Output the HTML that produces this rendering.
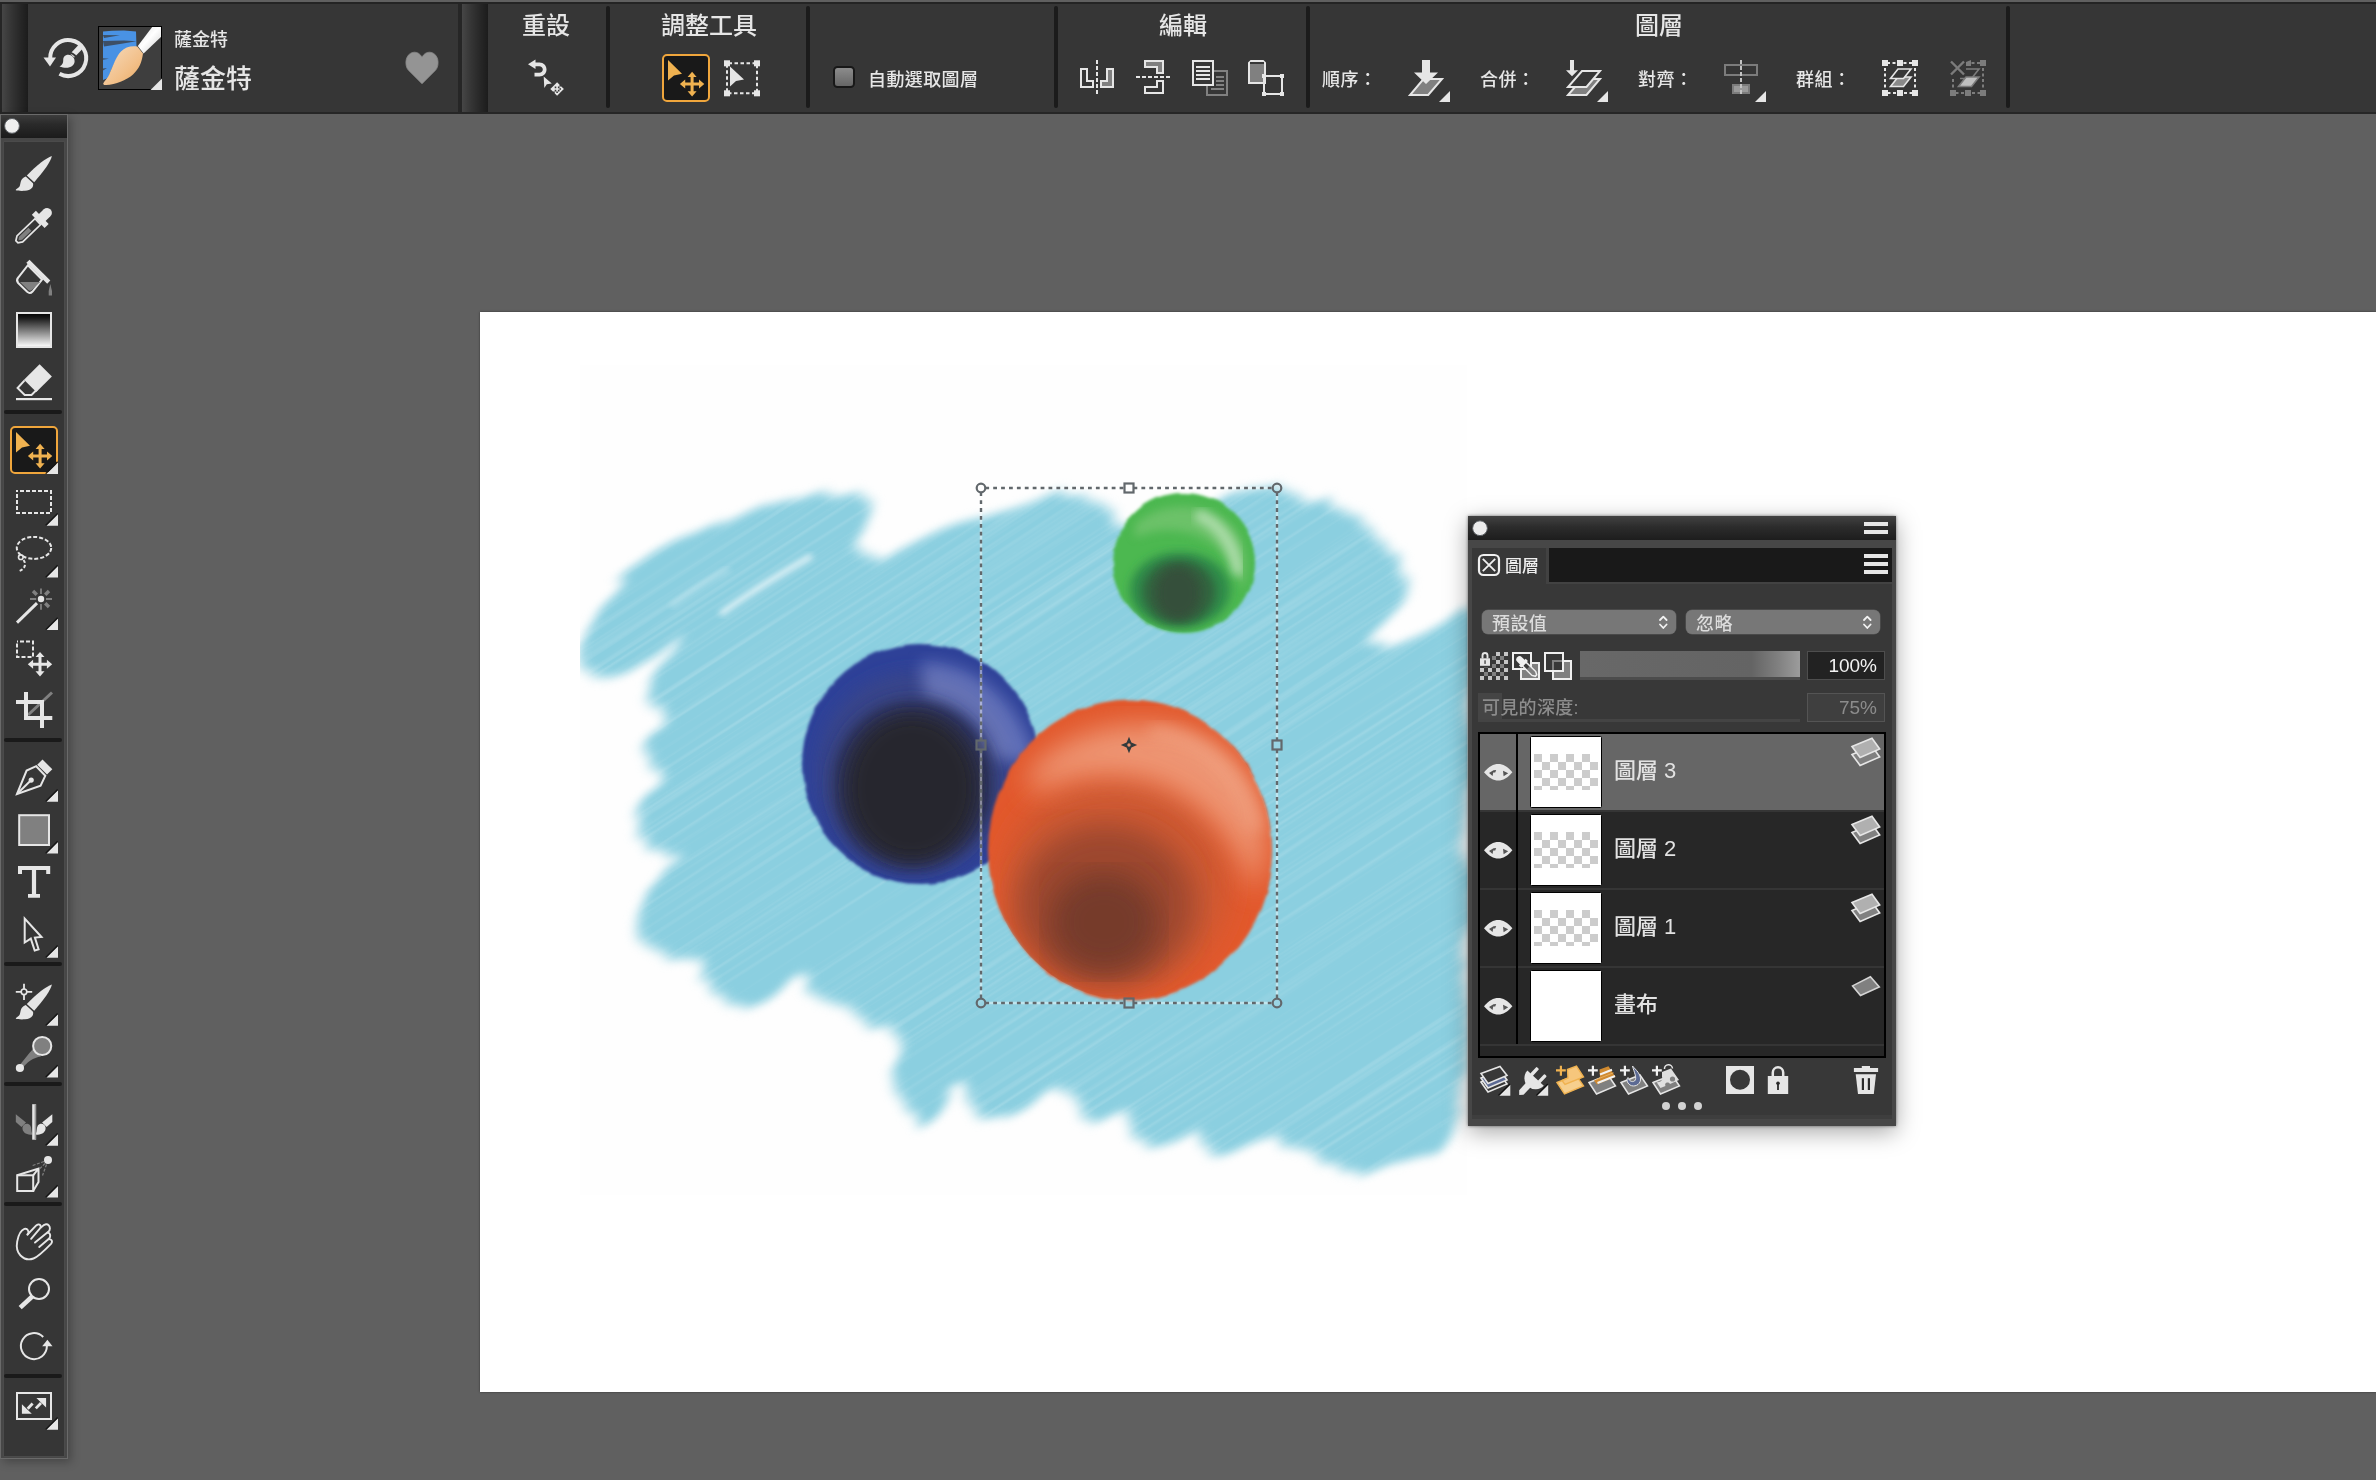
<!DOCTYPE html>
<html lang="zh-Hant">
<head>
<meta charset="utf-8">
<title>Painter</title>
<style>
*{box-sizing:border-box;margin:0;padding:0}
html,body{width:2376px;height:1480px;overflow:hidden;background:#606060}
body{position:relative;font-family:"Liberation Sans","Noto Sans CJK TC",sans-serif;color:#e4e4e4;font-weight:500}
.abs{position:absolute}
#root{position:absolute;left:0;top:0;width:2376px;height:1480px;will-change:transform;transform:translateZ(0)}
svg{position:absolute;overflow:visible}
/* ---------- top property bar ---------- */
#topstrip{left:0;top:0;width:2376px;height:4px;background:#606060;border-bottom:2px solid #242424}
#bar{left:0;top:4px;width:2376px;height:110px;background:#363636;border-bottom:2px solid #262626}
.grip{top:4px;height:108px;background:linear-gradient(90deg,#464646 0%,#353535 35%,#272727 70%,#1c1c1c 100%)}
.vsep{top:6px;width:4px;height:102px;border-radius:2px;background:#1b1b1b}
.ttl{top:9.5px;height:32px;line-height:32px;font-size:24px;text-align:center;white-space:nowrap;color:#e6e6e6}
.lbl{top:65.5px;height:28px;line-height:28px;font-size:18px;letter-spacing:.4px;white-space:nowrap;color:#e6e6e6}
.selbtn{width:48px;height:48px;border:2px solid #f0a63c;border-radius:5px;background:#191919}
.tri{width:0;height:0;border-left:11px solid transparent;border-bottom:11px solid #e6e6e6}
/* ---------- toolbox ---------- */
#tbx{left:0;top:114px;width:68px;height:1345px;background:#474747;border:1px solid #6a6a6a;box-shadow:3px 3px 9px rgba(0,0,0,.28)}
#tbxhead{left:1px;top:115px;width:66px;height:23px;background:linear-gradient(180deg,#3c3c3c,#2a2a2a 40%,#1b1b1b)}
#tbxbody{left:4px;top:142px;width:60px;height:1313.500px;background:#363636;box-shadow:0 0 0 .5px #505050}
.hsep{left:4px;width:58px;height:4px;border-radius:2px;background:#1a1a1a}
/* ---------- canvas ---------- */
#canvas{left:480px;top:312px;width:1896px;height:1080px;background:#fff;box-shadow:0 0 2px rgba(0,0,0,.5)}
/* ---------- layers panel ---------- */
#pnl{left:1468px;top:516px;width:428px;height:609.500px;background:#474747;box-shadow:0 6px 22px rgba(0,0,0,.35),0 0 3px rgba(0,0,0,.5)}
.dd{width:194px;height:24px;border-radius:6px;background:#777;box-shadow:0 0 0 .5px #5a5a5a}
.dd span{position:absolute;left:10px;top:.5px;line-height:26px;font-size:18px;color:#dcdcdc;letter-spacing:.4px}
.pct{width:78px;height:29px;line-height:27px;font-size:19px;text-align:right;padding-right:7px;font-family:"Liberation Sans",sans-serif;font-weight:400}
.th{left:1530px;width:72px;height:72px;background:#fff;border:1px solid #000;border-radius:1.500px}
.ck::after{content:"";position:absolute;left:3px;top:17px;width:64px;height:36px;background:conic-gradient(#fff 25%,#ccc 0 50%,#fff 0 75%,#ccc 0) 0 0/16px 16px}
.ln{left:1614px;height:32px;line-height:32px;font-size:22px;color:#e2e2e2;white-space:nowrap;font-weight:500}
</style>
</head>
<body>
<div id="root">
<div class="abs" id="topstrip"></div>
<div class="abs" id="bar"></div>
<div class="abs" style="left:0;top:4px;width:2px;height:108px;background:#262626"></div>
<div class="abs grip" style="left:2px;width:26px"></div>
<div class="abs" style="left:458px;top:4px;width:4px;height:108px;background:#262626"></div>
<div class="abs grip" style="left:462px;width:26px"></div>
<div class="abs vsep" style="left:606px"></div>
<div class="abs vsep" style="left:806px"></div>
<div class="abs vsep" style="left:1054px"></div>
<div class="abs vsep" style="left:1306px"></div>
<div class="abs vsep" style="left:2006px"></div>

<div class="abs" style="left:174px;top:26.5px;height:26px;line-height:26px;font-size:18px;color:#e6e6e6;white-space:nowrap">薩金特</div>
<div class="abs" style="left:174px;top:60px;height:38px;line-height:38px;font-size:26px;color:#e6e6e6;white-space:nowrap">薩金特</div>

<div class="abs ttl" style="left:496px;width:100px">重設</div>
<div class="abs ttl" style="left:629px;width:160px">調整工具</div>
<div class="abs ttl" style="left:1133px;width:100px">編輯</div>
<div class="abs ttl" style="left:1609px;width:100px">圖層</div>

<div class="abs lbl" style="left:868px">自動選取圖層</div>
<div class="abs lbl" style="left:1322px">順序：</div>
<div class="abs lbl" style="left:1480px">合併：</div>
<div class="abs lbl" style="left:1638px">對齊：</div>
<div class="abs lbl" style="left:1796px">群組：</div>

<div class="abs" style="left:833px;top:66px;width:22px;height:22px;border-radius:4.5px;border:2px solid #181818;background:linear-gradient(180deg,#8c8c8c,#666)"></div>
<div class="abs selbtn" style="left:662px;top:54px"></div>
<div class="abs" style="left:98px;top:26px;width:64px;height:64px;background:#3e3e3e;border:1px solid #000"></div>

<svg width="2376" height="113" viewBox="0 0 2376 113" style="left:0;top:0">
<defs>
<linearGradient id="peach" x1="0" y1="0" x2="1" y2="1"><stop offset="0" stop-color="#f6dcc0"/><stop offset=".6" stop-color="#f2c08a"/><stop offset="1" stop-color="#e8a860"/></linearGradient>
<linearGradient id="hand" x1="0" y1="0" x2="1" y2="1"><stop offset="0" stop-color="#dcdcdc"/><stop offset=".45" stop-color="#ffffff"/><stop offset="1" stop-color="#c8c8c8"/></linearGradient>
<clipPath id="thclip"><rect x="99" y="27" width="62" height="62"/></clipPath>
</defs>
<!-- reset brush icon -->
<g fill="none" stroke="#e6e6e6">
<path d="M50.2 58.5 A18 18 0 1 1 59.5 73.8" stroke-width="4"/>
<path d="M72.2 55.6 L82.3 45" stroke-width="5.5"/>
</g>
<path d="M43.5 57.5 L56 57.5 L50 66.5Z" fill="#e6e6e6"/>
<path d="M66 55.3 C70.5 53.6 74.800 57 74.600 61.500 C74.400 66.500 68 69.800 59.5 66.500 C62.5 65 63.2 63 63.2 60.800 C63 58 64 56.2 66 55.3Z" fill="#e6e6e6"/>
<path d="M64.5 52.8 C70.5 51 77 55 77.300 61.5" fill="none" stroke="#363636" stroke-width="2"/>
<!-- brush thumbnail -->
<filter id="b05" x="-10%" y="-10%" width="120%" height="120%"><feGaussianBlur stdDeviation=".5"/></filter>
<g clip-path="url(#thclip)">
<g filter="url(#b05)">
<path d="M103 31.500 L112 30.800 L124 30.500 L136 31.500 L136.500 47.500 L128 49 L118 56 L112 68 L108 78 L103 80 Z" fill="#4a92e4"/>
<path d="M103 35 L120 35.300 L104 38Z M103 41 L124 40.500 L136.500 41.200 L120 44 L104 46.500Z M103 58.200 L109 58.700 L103 59.800Z M103 68.500 L107 68 L103 70.500Z" fill="#3a4450" opacity=".85"/>
<path d="M153.700 25 L164 25 L164 34 L143.600 53.500 L137.800 46Z" fill="url(#hand)"/>
<path d="M137.300 46.600 C131 45.500 125 47.500 121 51.500 C116 56.500 113 66 109 75 C107 79 104.500 81 103.300 83.200 C103 84.500 104 85.200 106 85 C116 84.500 126 80.500 133 74.500 C139 69 142 62 143 53.500Z" fill="url(#peach)"/>
</g>
</g>
<path d="M162 78.500 L162 90 L150.500 90Z" fill="#e6e6e6"/>
<!-- heart -->
<path d="M422 83.800 L408.500 70.300 C405.200 66.800 405.600 60.500 406.800 57.800 C408.300 54 411.500 52.200 414.500 52.200 C417.500 52.200 420.200 53.800 422 57.200 C423.800 53.800 426.500 52.200 429.500 52.200 C432.500 52.200 435.700 54 437.200 57.800 C438.400 60.500 438.800 66.800 435.500 70.300Z" fill="#949494" stroke="#868686" stroke-width=".8" stroke-linejoin="round"/>
<!-- reset tool icon -->
<g fill="#e6e6e6">
<path d="M528 64.200 L535.500 59.500 L535.500 62.500 L539.500 62.500 C543.500 62.500 546.500 65.500 546.500 69.500 C546.500 73.500 543.500 76.500 539.500 76.500 L534.500 76.500 L534.500 72.800 L539.300 72.800 C541.300 72.800 542.800 71.300 542.800 69.500 C542.800 67.700 541.300 66.200 539.300 66.200 L535.500 66.200 L535.500 69Z"/>
<path d="M543.700 76.500 L551.800 83.500 L546.800 84.300 L544.300 88Z"/>
<path d="M557.100 82.200 L561.300 86.600 L552.900 86.600Z M557.100 95.800 L561.300 91.400 L552.900 91.400Z M550.300 89 L554.700 84.800 L554.700 93.200Z M563.900 89 L559.500 84.800 L559.500 93.200Z M556.300 85 H557.900 V88.200 H561 V89.800 H557.900 V93 H556.300 V89.800 H553.200 V88.200 H556.300Z"/>
</g>
<!-- selected tool: arrow + move -->
<g fill="#f0b250">
<path d="M668 60 L682 73.800 L674 75.500 L668 80.500Z"/>
<path d="M692.100 71.800 L696.600 77 L693.600 77 L693.600 82.600 L699 82.600 L699 79.600 L704.300 84.100 L699 88.600 L699 85.600 L693.600 85.600 L693.600 91.200 L696.600 91.200 L692.100 96.400 L687.600 91.200 L690.600 91.200 L690.600 85.600 L685.200 85.600 L685.200 88.600 L679.900 84.100 L685.200 79.600 L685.200 82.600 L690.600 82.600 L690.600 77 L687.600 77Z"/>
</g>
<!-- transform tool -->
<g fill="#e6e6e6">
<rect x="727" y="63.300" width="30" height="30" fill="none" stroke="#e6e6e6" stroke-width="2" stroke-dasharray="3.500 2.500" stroke-dashoffset="-1.500"/>
<rect x="724" y="60.300" width="6" height="6"/><rect x="754" y="60.300" width="6" height="6"/>
<rect x="724" y="90.300" width="6" height="6"/><rect x="754" y="90.300" width="6" height="6"/>
<path d="M730 66.500 L744 79.500 L736 81 L730 86.500Z"/>
</g>
<!-- edit: flip horizontal -->
<g fill="none" stroke="#e6e6e6" stroke-width="2">
<path d="M1081 69 H1087 V81 H1093 V87 H1081Z"/>
<path d="M1097 60 V94" stroke-dasharray="4 2"/>
<path d="M1113 69 H1107 V81 H1101 V87 H1113Z" fill="#808080"/>
<!-- flip vertical -->
<path d="M1145 61 H1163 V73 H1157 V67 H1145Z" fill="#808080"/>
<path d="M1136 77 H1170" stroke-dasharray="4 2"/>
<path d="M1145 93 H1163 V81 H1157 V87 H1145Z"/>
</g>
<!-- copy docs -->
<g fill="none" stroke="#808080" stroke-width="2">
<rect x="1207" y="71" width="20" height="24"/>
<path d="M1216 77 H1224 M1216 81 H1224 M1216 85 H1224 M1211 89 H1224"/>
</g>
<g fill="#363636" stroke="#e6e6e6" stroke-width="2">
<rect x="1193" y="61" width="20" height="24"/>
<path d="M1196 67 H1210 M1196 71 H1210 M1196 75 H1210 M1196 79 H1210"/>
</g>
<!-- free transform -->
<path d="M1251 61 H1263 L1265 63 V83 H1249 V63Z" fill="#808080" stroke="#e6e6e6" stroke-width="2"/>
<rect x="1250" y="62" width="14" height="2" fill="#363636"/>
<rect x="1264" y="76" width="18" height="18" fill="none" stroke="#e6e6e6" stroke-width="2"/>
<g fill="#e6e6e6"><rect x="1262" y="74" width="4" height="4"/><rect x="1280" y="74" width="4" height="4"/><rect x="1262" y="92" width="4" height="4"/><rect x="1280" y="92" width="4" height="4"/></g>
<!-- order -->
<path d="M1423.500 79 L1442 79 L1428.200 95 L1410 95Z" fill="#808080" stroke="#e6e6e6" stroke-width="2"/>
<path d="M1422 60 H1430 V72.500 H1438 L1426 84 L1414 72.500 H1422Z" fill="#e6e6e6"/>
<path d="M1450 91 V102 H1439Z" fill="#e6e6e6"/>
<!-- merge -->
<path d="M1582 79 L1600 79 L1586.500 95 L1568 95Z" fill="#808080" stroke="#e6e6e6" stroke-width="2"/>
<path d="M1582 71 L1600 71 L1586.500 87 L1568 87Z" fill="#363636" stroke="#e6e6e6" stroke-width="2"/>
<path d="M1570 60 H1574 V70.300 H1578 L1572 76.300 L1566 70.300 H1570Z" fill="#e6e6e6"/>
<path d="M1608 91 V102 H1597Z" fill="#e6e6e6"/>
<!-- align -->
<rect x="1725" y="65" width="32" height="10" fill="none" stroke="#7c7c7c" stroke-width="2"/>
<rect x="1733" y="85" width="16" height="8" fill="#9a9a9a" stroke="#7c7c7c" stroke-width="2"/>
<path d="M1741 60 V96" stroke="#c4c4c4" stroke-width="2" stroke-dasharray="4 2"/>
<path d="M1766 91 V102 H1755Z" fill="#e6e6e6"/>
<!-- group -->
<rect x="1885" y="63" width="30" height="30" fill="none" stroke="#e6e6e6" stroke-width="2" stroke-dasharray="3 2.500" stroke-dashoffset="-2"/>
<g fill="#e6e6e6"><rect x="1882" y="60" width="6" height="6"/><rect x="1897" y="60" width="6" height="6"/><rect x="1912" y="60" width="6" height="6"/><rect x="1882" y="90" width="6" height="6"/><rect x="1897" y="90" width="6" height="6"/><rect x="1912" y="90" width="6" height="6"/></g>
<path d="M1898 77 L1911 77 L1903.500 86.500 L1890.500 86.500Z" fill="#8a8a8a" stroke="#e6e6e6" stroke-width="1.600"/>
<path d="M1898 69 L1911 69 L1903.500 78.500 L1890.500 78.500Z" fill="#363636" stroke="#e6e6e6" stroke-width="1.600"/>
<!-- ungroup (disabled) -->
<rect x="1953" y="63" width="30" height="30" fill="none" stroke="#7c7c7c" stroke-width="2" stroke-dasharray="3 2.500" stroke-dashoffset="-2"/>
<rect x="1949" y="59" width="18" height="18" fill="#363636"/>
<g fill="#7c7c7c"><rect x="1980" y="60" width="6" height="6"/><rect x="1950" y="90" width="6" height="6"/><rect x="1965" y="90" width="6" height="6"/><rect x="1980" y="90" width="6" height="6"/><path d="M1966 62 L1971 60 V66 H1966Z"/></g>
<path d="M1951 61.500 L1964 74.500 M1964 61.500 L1951 74.500" stroke="#7c7c7c" stroke-width="2.400"/>
<path d="M1966 69 L1979 69 L1971.500 78.500 L1960 78.500" fill="none" stroke="#7c7c7c" stroke-width="1.600"/>
<path d="M1966 77 L1979 77 L1971.500 86.500 L1958.500 86.500Z" fill="#c0c0c0" stroke="#7c7c7c" stroke-width="1.600"/>
</svg>
<div class="abs" id="tbx"></div>
<div class="abs" id="tbxhead"></div>
<div class="abs" id="tbxbody"></div>
<div class="abs hsep" style="top:410px"></div>
<div class="abs hsep" style="top:738px"></div>
<div class="abs hsep" style="top:962px"></div>
<div class="abs hsep" style="top:1082px"></div>
<div class="abs hsep" style="top:1202px"></div>
<div class="abs hsep" style="top:1374px"></div>
<div class="abs selbtn" style="left:10px;top:426px"></div>
<svg width="72" height="1480" viewBox="0 0 72 1480" style="left:0;top:0">
<defs>
<linearGradient id="bw" x1="0" y1="0" x2="0" y2="1"><stop offset="0" stop-color="#000"/><stop offset=".15" stop-color="#1a1a1a"/><stop offset="1" stop-color="#fff"/></linearGradient>
<g id="brushico">
<path d="M51.9 156 C50.500 162 44 171 34.200 182.200 L26.800 175.400 C37 165 46 158 51.900 156Z"/>
<path d="M25.800 176.500 L33 183.300 C34 187 31 190.500 25 190.800 C21 191 17 190.800 15.800 190.300 C15.600 189 18 188.500 19.500 186.500 C21 184 19.500 179 25.800 176.500Z"/>
</g>
<g id="tri"><path d="M58 -11.500 V0 H46.500Z"/><path d="M57.600 -12.300 L45.700 -0.400" stroke="#161616" stroke-width="1.300" fill="none"/></g>
<g id="movex">
<path d="M0 -12.300 L4.500 -7.100 L1.500 -7.100 L1.500 -1.500 L6.900 -1.500 L6.900 -4.500 L12.200 0 L6.900 4.500 L6.900 1.500 L1.500 1.500 L1.500 7.100 L4.500 7.100 L0 12.300 L-4.500 7.100 L-1.500 7.100 L-1.500 1.500 L-6.900 1.500 L-6.900 4.500 L-12.200 0 L-6.900 -4.500 L-6.900 -1.500 L-1.500 -1.500 L-1.500 -7.100 L-4.500 -7.100Z"/>
</g>
</defs>
<circle cx="12" cy="125.900" r="7.400" fill="#efefef" stroke="#5a5e62" stroke-width="1"/>
<g fill="#e6e6e6">
<!-- 1 brush -->
<use href="#brushico"/>
<!-- 2 dropper -->
<g transform="translate(16.200 242.400) rotate(-43.800)">
<path d="M1 -1.500 L5 -4.100 H30 V4.100 H5 L1 1.500Z" fill="none" stroke="#e6e6e6" stroke-width="1.700"/>
<path d="M3.200 0 L6 -2.200 H19 V2.200 H6Z" fill="#808080"/>
<rect x="30.500" y="-9.200" width="5.600" height="18.400"/>
<path d="M35 -4.800 H42.800 A4.800 4.800 0 0 1 42.800 4.800 H35Z"/>
</g>
<!-- 3 bucket -->
<g>
<path d="M27.900 265.200 L42 279.500 L32.500 291.500 Q30 294.300 27.200 291.800 L18.200 283 Q15.800 280.300 18.200 277.500Z" fill="none" stroke="#e6e6e6" stroke-width="2"/>
<path d="M20 282 H40.200 L32 289.800 Q30 291.500 28 289.800Z" fill="#808080"/>
<path d="M26.300 262.700 L29.500 259.700 L50.300 280.600 L47.200 283.700Z"/>
<path d="M50.300 284 L52 291 V295.600 H48.700 V291Z" fill="#808080"/>
</g>
<!-- 4 gradient -->
<rect x="17" y="313" width="34" height="34" fill="url(#bw)" stroke="#e6e6e6" stroke-width="2"/>
<!-- 5 eraser -->
<g>
<path d="M39.600 364.200 L51.900 376.500 L36.300 392 L24 379.700Z"/>
<path d="M24.600 380.400 L17.600 388 L24.700 395 H31.500 L37 389.500" fill="none" stroke="#e6e6e6" stroke-width="2"/>
<rect x="16" y="398" width="36" height="2.200"/>
</g>
</g>
<!-- 6 selected -->
<g fill="#f0b250" transform="translate(-652 372)">
<path d="M668 60 L682 73.800 L674 75.500 L668 80.500Z"/>
<use href="#movex" x="692.100" y="84.100"/>
</g>
<use href="#tri" y="474" fill="#e6e6e6"/>
<g fill="#e6e6e6">
<!-- 7 rect marquee -->
<rect x="17" y="491" width="34" height="22" fill="none" stroke="#e6e6e6" stroke-width="2" stroke-dasharray="4 2" stroke-dashoffset="3"/>
<use href="#tri" y="525.700"/>
<!-- 8 lasso -->
<ellipse cx="34" cy="547.900" rx="17.200" ry="11" fill="none" stroke="#e6e6e6" stroke-width="2" stroke-dasharray="4 2"/>
<circle cx="20.800" cy="557.200" r="2.300" fill="#363636" stroke="#e6e6e6" stroke-width="1.600"/>
<path d="M23.500 560 C26.500 564 25 569 19.500 571" fill="none" stroke="#e6e6e6" stroke-width="2" stroke-dasharray="3.200 2"/>
<use href="#tri" y="577.600"/>
<!-- 9 wand -->
<path d="M17 622.600 L37 603.200" stroke="#e6e6e6" stroke-width="3"/>
<circle cx="41" cy="599" r="3.200"/>
<g stroke="#808080" fill="none">
<path d="M41 588.500 V594 M41 604 V609.800 M30 599 H36.200 M46 599 H52" stroke-width="1.800"/>
<path d="M33 591 L36.800 594.800 M49 591 L45.200 594.800 M45.200 603.200 L49 607" stroke-width="3.400"/>
</g>
<use href="#tri" y="630"/>
<!-- 10 move selection -->
<rect x="17" y="641.500" width="16" height="15.500" fill="none" stroke="#e6e6e6" stroke-width="2" stroke-dasharray="4 2" stroke-dashoffset="3"/>
<use href="#movex" x="40" y="664.200"/>
<!-- 11 crop -->
<path d="M28 715 L52 692.500" stroke="#808080" stroke-width="3"/>
<path d="M24 692 H28 V700 H44 V716 H52.300 V720 H44 V728 H40 V720 H24 V704 H16 V700 H24Z M28 704 V716 H40 V704Z" fill-rule="evenodd"/>
<!-- 12 pen -->
<path d="M42.500 759.500 L52.300 769.300 L47 774.600 L37.200 764.800Z"/>
<path d="M17 794 L26.600 770.600 L36.200 766.200 L45.300 775.800 L40.600 785.600Z" fill="none" stroke="#e6e6e6" stroke-width="2" stroke-linejoin="miter"/>
<path d="M17.500 793.500 L30.500 780.800" stroke="#e6e6e6" stroke-width="2"/>
<circle cx="31.200" cy="780.100" r="2.600"/>
<use href="#tri" y="801.800"/>
<!-- 13 rect shape -->
<rect x="19.200" y="815.200" width="29.800" height="29.800" fill="#808080" stroke="#e6e6e6" stroke-width="2"/>
<use href="#tri" y="853.600"/>
<!-- 14 text -->
<path d="M18 866 H50.200 V874 H46.200 V870 H36.100 V894 H40 V897.800 H28 V894 H31.900 V870 H22 V874 H18Z"/>
<!-- 15 arrow -->
<path d="M24.700 918.500 L24.700 942.500 L30.800 938.600 L34.700 950.600 L38.600 949.300 L34.900 937.600 L41.500 937Z" fill="none" stroke="#e6e6e6" stroke-width="2" stroke-linejoin="miter"/>
<use href="#tri" y="957.800"/>
<!-- 16 clone -->
<use href="#brushico" y="828.500"/>
<circle cx="24" cy="991.800" r="2.800" fill="none" stroke="#e6e6e6" stroke-width="1.600"/>
<path d="M24 983.800 V989 M24 994.600 V1000 M15.800 991.800 H21.200 M26.800 991.800 H32.200" stroke="#e6e6e6" stroke-width="1.800"/>
<use href="#tri" y="1025.800"/>
<!-- 17 dodge -->
<path d="M18.500 1066.500 C24 1060 28 1054 33.500 1048.500 L41 1056.500 C33.500 1057.500 27 1062 21.300 1069.500Z" fill="#808080"/>
<circle cx="42.200" cy="1046" r="9.100" fill="#808080" stroke="#e6e6e6" stroke-width="2"/>
<circle cx="19.900" cy="1068" r="4.100"/>
<use href="#tri" y="1077.400"/>
<!-- 18 mirror -->
<g fill="#808080">
<path d="M15.800 1114.200 L15.800 1122 L21.500 1127 L26 1122.500Z"/>
<path d="M22.500 1127.600 C23 1123.500 28 1122.500 30.300 1125.500 C31.800 1128 30.800 1131.500 32.500 1134 L32.500 1134.500 C27 1135.500 22 1132.500 22.500 1127.600Z"/>
</g>
<path d="M52.300 1114.200 L52.300 1122 L46.600 1127 L42.100 1122.500Z"/>
<path d="M45.600 1127.600 C45.100 1123.500 40.100 1122.500 37.800 1125.500 C36.300 1128 37.300 1131.500 35.600 1134 L35.600 1134.500 C41.100 1135.500 46.100 1132.500 45.600 1127.600Z"/>
<rect x="32.200" y="1104.200" width="3.900" height="35.500"/>
<rect x="34.600" y="1104.200" width="1.500" height="35.500" fill="#9a9a9a"/>
<use href="#tri" y="1145.700"/>
<!-- 19 cube -->
<g fill="none" stroke="#e6e6e6" stroke-width="2">
<rect x="17.200" y="1175.300" width="16" height="15.700"/>
<path d="M17.200 1175.300 L38.500 1168.500 L38.500 1182 L33.200 1191 M33.200 1175.300 L38.500 1168.500"/>
</g>
<circle cx="48" cy="1160" r="4"/>
<path d="M44 1161.500 L32.500 1165.500 M45 1163.500 L40 1168.500 M46.500 1164.500 L42.500 1175.500" fill="none" stroke="#808080" stroke-width="1.200" stroke-dasharray="3 1.500"/>
<use href="#tri" y="1197.600"/>
<!-- 20 hand -->
<g fill="none" stroke="#e6e6e6" stroke-width="1.900" stroke-linecap="round" stroke-linejoin="round">
<path d="M27.500 1234.500 C28.700 1233.300 28.900 1231.800 28 1230.400 C27.200 1229 25.800 1228.400 24.400 1228.900 C21 1230.200 18.200 1236 17.200 1241.500 C16.200 1247 17 1252 20.500 1255.500 C24 1259 29 1260.200 33.500 1258.500 C38.500 1256.500 42.500 1252.500 51 1243.800 C52.400 1242.300 52.300 1240.600 51 1239.800 C50.200 1239.300 49.400 1239.100 48.700 1239.200"/>
<path d="M47.600 1232.600 C49 1232.700 50.200 1234 50.200 1235.800 C50.200 1237.200 49.600 1238.200 48.900 1238.800 L39.200 1246.900"/>
<path d="M41.100 1227.400 C43 1225.500 44.500 1224.500 46 1224.300 C48.200 1224.100 49.900 1226 49.900 1228.400 C49.900 1230 49.200 1231 48.300 1231.700 L35 1242.600"/>
<path d="M27.500 1234.500 L36 1225.700 C37.500 1224.200 39.200 1224 40.200 1225.200 C41.100 1226.300 40.800 1227.600 39.800 1228.700 L31.100 1238.800"/>
</g>
<!-- 21 zoom -->
<circle cx="39" cy="1289" r="10" fill="none" stroke="#e6e6e6" stroke-width="2"/>
<path d="M32.500 1296.200 L20.200 1307.600" stroke="#e6e6e6" stroke-width="4.600"/>
<!-- 22 rotate -->
<path d="M46.900 1346.100 A13 13 0 1 1 43.200 1337" fill="none" stroke="#e6e6e6" stroke-width="2"/>
<path d="M47.400 1339.800 L52.500 1346.300 H42.200Z"/>
<!-- 23 fullscreen -->
<rect x="17" y="1393" width="34" height="26" fill="none" stroke="#e6e6e6" stroke-width="2"/>
<path d="M36.400 1398.100 H46.100 V1407.600Z M21.900 1404.200 V1413.800 H31.800Z"/>
<path d="M41 1403 L35.800 1408.400 M27.700 1408.700 L32.600 1403.500" stroke="#e6e6e6" stroke-width="2.800"/>
<use href="#tri" y="1429.800"/>
</g>
</svg>
<div class="abs" id="canvas"></div>
<svg width="2376" height="1480" viewBox="0 0 2376 1480" style="left:0;top:0">
<defs>
<clipPath id="imgclip"><rect x="580" y="365" width="887.500" height="830"/></clipPath>
<filter id="paint" filterUnits="userSpaceOnUse" x="380" y="280" width="1300" height="1100" color-interpolation-filters="sRGB">
<feTurbulence type="fractalNoise" baseFrequency="0.004 0.07" numOctaves="2" seed="7" result="n1"/>
<feDisplacementMap in="SourceGraphic" in2="n1" scale="20" xChannelSelector="R" yChannelSelector="G" result="rough"/>
<feGaussianBlur in="rough" stdDeviation="7 4.5" result="soft"/>
<feTurbulence type="fractalNoise" baseFrequency="0.002 0.22" numOctaves="2" seed="11" result="n2"/>
<feColorMatrix in="n2" type="matrix" values="0 0 0 0 1  0 0 0 0 1  0 0 0 0 1  0.42 0 0 0 -0.19" result="streak"/>
<feComposite in="streak" in2="soft" operator="in" result="streakin"/>
<feMerge><feMergeNode in="soft"/><feMergeNode in="streakin"/></feMerge>
</filter>
<filter id="rough2" filterUnits="userSpaceOnUse" x="760" y="460" width="560" height="580" color-interpolation-filters="sRGB">
<feTurbulence type="fractalNoise" baseFrequency="0.035" numOctaves="2" seed="5" result="n"/>
<feDisplacementMap in="SourceGraphic" in2="n" scale="5" xChannelSelector="R" yChannelSelector="G" result="r"/>
<feGaussianBlur in="r" stdDeviation="1.600"/>
</filter>
<filter id="bl8"><feGaussianBlur stdDeviation="8"/></filter>
<filter id="bl14"><feGaussianBlur stdDeviation="14"/></filter>
<filter id="bl5"><feGaussianBlur stdDeviation="5"/></filter>
<filter id="bl3"><feGaussianBlur stdDeviation="3"/></filter>
<radialGradient id="gB" gradientUnits="userSpaceOnUse" cx="920.500" cy="764" r="121" fx="898" fy="803">
<stop offset="0" stop-color="#25262e"/><stop offset=".45" stop-color="#282b3e"/><stop offset=".6" stop-color="#2f3560"/><stop offset=".75" stop-color="#384488"/><stop offset=".88" stop-color="#34489c"/><stop offset="1" stop-color="#2a3c96"/>
</radialGradient>
<radialGradient id="gO" gradientUnits="userSpaceOnUse" cx="1130" cy="850" r="152" fx="1104" fy="926">
<stop offset="0" stop-color="#6e382a"/><stop offset=".36" stop-color="#7c3d2d"/><stop offset=".55" stop-color="#a0462f"/><stop offset=".72" stop-color="#c85230"/><stop offset=".86" stop-color="#e05a2e"/><stop offset="1" stop-color="#e4582a"/>
</radialGradient>
<radialGradient id="gG" gradientUnits="userSpaceOnUse" cx="1184" cy="563" r="71" fx="1178" fy="590">
<stop offset="0" stop-color="#34503a"/><stop offset=".45" stop-color="#33583c"/><stop offset=".62" stop-color="#2f7848"/><stop offset=".78" stop-color="#36ac54"/><stop offset=".9" stop-color="#50b854"/><stop offset="1" stop-color="#4cb850"/>
</radialGradient>
<clipPath id="cB"><ellipse cx="920.500" cy="764" rx="118" ry="119.500"/></clipPath>
<clipPath id="cO"><ellipse cx="1130" cy="850" rx="141.500" ry="150"/></clipPath>
<clipPath id="cG"><ellipse cx="1184" cy="563" rx="70.500" ry="69.500"/></clipPath>
</defs>
<g clip-path="url(#imgclip)">
<rect x="580" y="365" width="887.500" height="830" fill="#fefefe"/>
<g transform="rotate(-33 1024 830)">
<path d="M753.5 435.0 C765.0 424.6 770.1 424.9 787.1 416.2 C804.2 407.6 800.2 407.2 817.5 402.6 C834.8 397.9 833.8 399.6 852.1 398.8 C870.4 398.0 866.5 398.1 886.2 399.5 C906.0 400.9 905.3 401.0 926.2 404.0 C947.1 407.1 942.9 405.3 964.6 411.1 C986.3 416.9 983.8 416.2 1007.5 425.8 C1031.1 435.4 1036.2 437.1 1053.2 447.2 C1070.2 457.2 1068.0 454.8 1071.2 463.6 C1074.4 472.3 1069.8 473.1 1065.3 480.0 C1060.8 486.9 1061.0 484.1 1054.3 489.6 C1047.6 495.1 1042.0 491.7 1040.0 500.6 C1038.0 509.5 1038.1 516.0 1046.9 523.0 C1055.7 529.9 1055.0 524.3 1073.0 526.8 C1091.1 529.3 1089.2 526.6 1114.7 532.4 C1140.2 538.2 1143.4 540.9 1168.7 548.4 C1194.0 555.9 1191.2 554.7 1209.6 560.7 C1228.1 566.6 1224.1 562.7 1237.8 570.6 C1251.4 578.5 1252.3 579.7 1260.8 590.3 C1269.2 600.8 1265.2 597.9 1269.3 610.1 C1273.5 622.4 1263.8 619.1 1276.3 636.1 C1288.8 653.1 1292.8 668.3 1316.1 673.9 C1339.5 679.6 1341.1 657.7 1363.9 657.3 C1386.8 656.8 1382.1 661.1 1401.8 672.3 C1421.6 683.6 1421.7 684.7 1437.9 699.4 C1454.2 714.0 1452.0 708.0 1462.7 727.4 C1473.3 746.7 1472.7 747.5 1477.9 771.8 C1483.1 796.2 1483.9 800.1 1482.1 818.7 C1480.2 837.2 1480.3 831.8 1471.0 841.3 C1461.6 850.8 1461.6 848.5 1447.0 854.3 C1432.4 860.1 1417.4 857.4 1416.3 863.0 C1415.2 868.6 1425.7 870.0 1442.8 875.4 C1460.0 880.9 1460.8 880.6 1480.6 883.3 C1500.5 886.0 1509.0 875.8 1517.3 885.6 C1525.5 895.4 1525.0 899.5 1511.6 920.1 C1498.2 940.7 1485.9 936.8 1467.2 962.8 C1448.4 988.8 1461.0 989.0 1441.2 1017.5 C1421.4 1046.0 1413.8 1038.6 1393.0 1069.6 C1372.2 1100.7 1382.6 1105.0 1363.3 1133.8 C1343.9 1162.6 1340.3 1149.1 1320.5 1177.6 C1300.8 1206.1 1308.4 1211.9 1289.1 1240.6 C1269.8 1269.4 1269.6 1263.6 1248.1 1285.5 C1226.5 1307.4 1226.6 1313.8 1208.3 1322.9 C1190.0 1332.0 1197.3 1323.9 1179.4 1319.6 C1161.5 1315.3 1159.0 1314.2 1141.2 1306.8 C1123.5 1299.4 1128.3 1306.1 1112.8 1291.9 C1097.2 1277.6 1093.7 1269.6 1082.9 1253.4 C1072.1 1237.2 1078.8 1239.3 1072.4 1231.0 C1066.0 1222.8 1074.9 1228.6 1059.0 1222.3 C1043.0 1216.1 1027.7 1218.5 1012.5 1207.6 C997.2 1196.8 1011.2 1190.3 1001.9 1181.7 C992.5 1173.1 990.1 1181.7 977.4 1175.3 C964.7 1169.0 961.3 1172.3 954.2 1157.9 C947.0 1143.4 959.0 1134.7 950.7 1121.0 C942.4 1107.4 933.6 1121.2 923.0 1106.6 C912.4 1092.1 925.2 1077.8 910.9 1066.6 C896.6 1055.4 889.5 1069.1 869.3 1064.6 C849.0 1060.0 846.0 1063.3 835.0 1049.5 C823.9 1035.6 840.8 1018.8 827.9 1012.7 C815.0 1006.5 800.7 1027.9 786.7 1026.5 C772.7 1025.0 777.1 1023.2 775.4 1007.2 C773.7 991.2 772.8 985.5 780.4 966.3 C788.1 947.2 802.7 949.9 804.2 935.3 C805.7 920.7 792.2 924.4 786.2 911.6 C780.2 898.8 789.2 903.2 781.7 887.3 C774.3 871.3 765.0 867.3 758.3 851.8 C751.5 836.3 768.3 834.6 756.3 829.1 C744.4 823.5 733.1 834.9 713.4 831.0 C693.6 827.1 692.7 825.9 682.4 814.4 C672.0 802.9 675.4 800.8 674.6 787.9 C673.7 775.0 685.9 783.6 679.3 765.9 C672.6 748.2 655.3 741.8 649.6 721.6 C644.0 701.4 647.4 703.2 658.1 690.2 C668.8 677.1 673.4 678.8 689.8 672.6 C706.2 666.4 715.6 673.2 719.7 667.0 C723.8 660.7 709.7 661.0 705.1 649.1 C700.4 637.2 698.9 635.7 702.2 622.2 C705.6 608.8 705.1 607.6 717.5 598.8 C729.9 590.0 740.9 597.8 748.7 589.2 C756.5 580.6 743.8 577.9 746.8 566.5 C749.8 555.1 750.0 553.3 759.9 546.4 C769.8 539.5 777.2 550.8 783.9 540.5 C790.6 530.3 770.4 522.8 784.9 507.8 C799.4 492.8 834.4 490.4 838.4 484.1 C842.5 477.9 820.2 486.2 800.2 484.3 C780.1 482.4 778.1 484.8 763.2 477.0 C748.2 469.2 746.6 466.3 744.1 455.0 C741.5 443.8 742.0 445.3 753.5 435.0Z" fill="#8bcfe0" filter="url(#paint)"/>
</g>
<path d="M722 613 C750 592 780 574 810 557" fill="none" stroke="#fff" stroke-width="5" stroke-linecap="round" opacity=".85" filter="url(#bl3)"/>
<path d="M672 606 C690 592 708 580 728 570" fill="none" stroke="#fff" stroke-width="4" stroke-linecap="round" opacity=".4" filter="url(#bl3)"/>
<!-- blue sphere -->
<g filter="url(#rough2)">
<ellipse cx="920.500" cy="764" rx="118.500" ry="120" fill="#2e4198"/>
</g>
<g clip-path="url(#cB)">
<ellipse cx="915" cy="772" rx="98" ry="100" fill="#39458a" filter="url(#bl8)"/>
<path d="M920 662 C970 660 1020 695 1038 765 C1020 762 1000 760 992 758 C985 728 965 708 925 700Z" fill="#8a96d4" opacity=".55" filter="url(#bl8)"/>
<ellipse cx="913" cy="785" rx="80" ry="84" fill="#2b2f50" filter="url(#bl8)"/>
<ellipse cx="912" cy="788" rx="64" ry="72" fill="#25262f" filter="url(#bl8)"/>
</g>
<!-- orange sphere -->
<g filter="url(#rough2)">
<ellipse cx="1130" cy="850" rx="142" ry="150.500" fill="#e2582c"/>
</g>
<g clip-path="url(#cO)">
<ellipse cx="1116" cy="885" rx="112" ry="104" fill="#cc5833" filter="url(#bl14)"/>
<path d="M1030 772 C1070 720 1180 702 1236 760 C1268 798 1274 850 1254 896 C1244 850 1205 796 1145 780 C1100 770 1060 778 1030 796Z" fill="#f0a080" opacity=".85" filter="url(#bl14)"/>
<path d="M1150 730 C1200 735 1245 775 1258 830" fill="none" stroke="#f6bca0" stroke-width="12" opacity=".5" filter="url(#bl8)"/>
<ellipse cx="1106" cy="905" rx="88" ry="80" fill="#9c462f" filter="url(#bl14)"/>
<ellipse cx="1104" cy="922" rx="54" ry="50" fill="#763a2b" filter="url(#bl14)"/>
</g>
<!-- green sphere -->
<g filter="url(#rough2)">
<ellipse cx="1184" cy="563" rx="71" ry="70" fill="#4cb850"/>
</g>
<g clip-path="url(#cG)">
<path d="M1135 525 C1160 500 1210 500 1235 530 C1248 548 1250 572 1242 590 C1235 560 1215 540 1190 533 C1170 528 1150 530 1135 538Z" fill="#74c470" opacity=".8" filter="url(#bl5)"/>
<path d="M1196 514 C1218 522 1236 545 1238 575" fill="none" stroke="#d4ecd2" stroke-width="13" opacity=".6" filter="url(#bl5)"/>
<ellipse cx="1180" cy="590" rx="50" ry="38" fill="#2f8a4a" filter="url(#bl5)"/>
<ellipse cx="1179" cy="592" rx="36" ry="32" fill="#33603e" filter="url(#bl5)"/>
<ellipse cx="1178" cy="593" rx="22" ry="26" fill="#35503a" filter="url(#bl5)"/>
</g>
</g>
<!-- selection -->
<path d="M985.300 488 H1124.500 M1133.500 488 H1272.700 M985.300 1003 H1124.500 M1133.500 1003 H1272.700 M981 492.300 V740.500 M981 749.500 V998.700 M1277 492.300 V740.500 M1277 749.500 V998.700" fill="none" stroke="#fff" stroke-opacity=".45" stroke-width="2.400"/>
<g fill="none" stroke="#62686c" stroke-width="2.400">
<path d="M985.300 488 H1124.500 M1133.500 488 H1272.700 M985.300 1003 H1124.500 M1133.500 1003 H1272.700 M981 492.300 V740.500 M981 749.500 V998.700 M1277 492.300 V740.500 M1277 749.500 V998.700" stroke-dasharray="3.800 4.100"/>
<g fill="rgba(255,255,255,.12)" stroke-width="2.200">
<circle cx="981" cy="488" r="4.300"/><circle cx="1277" cy="488" r="4.300"/><circle cx="981" cy="1003" r="4.300"/><circle cx="1277" cy="1003" r="4.300"/>
<rect x="1124.500" y="483.500" width="9" height="9"/><rect x="1124.500" y="998.500" width="9" height="9"/><rect x="976.500" y="740.500" width="9" height="9"/><rect x="1272.500" y="740.500" width="9" height="9"/>
</g>
</g>
<path d="M1129 736.800 L1131.400 742.600 L1137.200 745 L1131.400 747.400 L1129 753.200 L1126.600 747.400 L1120.800 745 L1126.600 742.600Z M1129 743.300 A1.700 1.700 0 1 0 1129 746.700 A1.700 1.700 0 1 0 1129 743.300Z" fill="#333a3c" fill-rule="evenodd"/>
</svg>
<div class="abs" id="pnl"></div>
<div class="abs" style="left:1468px;top:516px;width:428px;height:24px;background:linear-gradient(180deg,#424242 0%,#2c2c2c 45%,#1d1d1d 100%)"></div>
<div class="abs" style="left:1472px;top:548px;width:420px;height:567px;background:#383838"></div>
<div class="abs" style="left:1472px;top:1115px;width:420px;height:3.500px;background:#3e3e3e"></div>
<div class="abs" style="left:1546px;top:548px;width:346px;height:36px;background:#424242"></div>
<div class="abs" style="left:1549px;top:548px;width:343px;height:34px;background:#191919"></div>
<div class="abs" style="left:1505px;top:554px;height:26px;line-height:26px;font-size:17px;color:#eee;white-space:nowrap">圖層</div>
<!-- dropdowns -->
<div class="abs dd" style="left:1482px;top:610px"><span>預設值</span></div>
<div class="abs dd" style="left:1686px;top:610px"><span>忽略</span></div>
<!-- opacity slider -->
<div class="abs" style="left:1580px;top:651px;width:220px;height:26px;background:linear-gradient(90deg,#686868 0%,#646464 78%,#808080 90%,#9c9c9c 100%)"></div>
<div class="abs" style="left:1580px;top:677px;width:220px;height:3px;background:#4c4c4c"></div>
<div class="abs pct" style="left:1807px;top:651px;background:#222;border:1px solid #4e4e4e;color:#f2f2f2">100%</div>
<!-- depth row -->
<div class="abs" style="left:1478px;top:693px;width:24px;height:29px;background:#454545"></div>
<div class="abs" style="left:1478px;top:718.500px;width:322px;height:3.500px;background:#444"></div>
<div class="abs" style="left:1482px;top:694px;height:28px;line-height:28px;font-size:18px;color:#8c8c8c;white-space:nowrap;letter-spacing:.3px">可見的深度:</div>
<div class="abs pct" style="left:1807px;top:693px;background:#3f3f3f;border:1px solid #545454;color:#8c8c8c">75%</div>
<!-- layer list -->
<div class="abs" style="left:1478px;top:732px;width:408px;height:326px;background:#000"></div>
<div class="abs" style="left:1480px;top:734px;width:404px;height:322px;background:#272727"></div>
<div class="abs" style="left:1480px;top:734px;width:404px;height:76px;background:#666"></div>
<div class="abs" style="left:1480px;top:810px;width:404px;height:2px;background:#353535"></div>
<div class="abs" style="left:1480px;top:888px;width:404px;height:2px;background:#353535"></div>
<div class="abs" style="left:1480px;top:966px;width:404px;height:2px;background:#353535"></div>
<div class="abs" style="left:1480px;top:1044px;width:404px;height:2px;background:#353535"></div>
<div class="abs" style="left:1516px;top:734px;width:2px;height:310px;background:#000"></div>
<div class="abs th ck" style="top:736px"></div>
<div class="abs th ck" style="top:814px"></div>
<div class="abs th ck" style="top:892px"></div>
<div class="abs th" style="top:970px"></div>
<div class="abs ln" style="top:755px">圖層 3</div>
<div class="abs ln" style="top:833px">圖層 2</div>
<div class="abs ln" style="top:911px">圖層 1</div>
<div class="abs ln" style="top:989px">畫布</div>
<svg width="2376" height="1480" viewBox="0 0 2376 1480" style="left:0;top:0">
<defs>
<g id="eye"><path d="M0 8.200 C5 2.500 9.500 0 14.200 0 C19 0 23.500 2.500 28.400 8.200 C23.500 14 19 16.500 14.200 16.500 C9.500 16.500 5 14 0 8.200Z" fill="#e6e6e6"/>
<path d="M5 9 L9.500 6.200 L12.200 6 L11.200 8.600 L9.200 8.400 L8.600 12Z M19 6.800 L24.200 9.200 L19.600 12.300Z" fill="#555"/></g>
<g id="lyr2"><path d="M1852 754.600 L1872 746.200 L1879.700 757 L1860.100 765.400Z" fill="#808080" stroke="#e6e6e6" stroke-width="1.600" stroke-linejoin="miter"/>
<path d="M1852 746.600 L1872 738.200 L1879.700 749 L1860.100 757.400Z" fill="#b0b0b0" stroke="#e6e6e6" stroke-width="1.600" stroke-linejoin="miter"/></g>
<g id="ptri"><path d="M0 -11 V0 H-11Z"/><path d="M-0.400 -11.800 L-11.800 -0.400" stroke="#111" stroke-width="1.200" fill="none"/></g>
</defs>
<circle cx="1480" cy="528.200" r="7.400" fill="#ececec" stroke="#55595d" stroke-width="1"/>
<g fill="#e6e6e6">
<rect x="1864" y="522" width="24" height="4"/><rect x="1864" y="530" width="24" height="4"/>
<rect x="1864" y="554" width="24" height="4"/><rect x="1864" y="562" width="24" height="4"/><rect x="1864" y="570" width="24" height="4"/>
</g>
<rect x="1479" y="555" width="20" height="20" rx="4.500" fill="none" stroke="#f0f0f0" stroke-width="2.200"/>
<path d="M1482.800 558.800 L1495.200 571.200 M1495.200 558.800 L1482.800 571.200" stroke="#f0f0f0" stroke-width="1.800"/>
<!-- dropdown chevrons -->
<g fill="none" stroke="#f2f2f2" stroke-width="1.800" stroke-linecap="round" stroke-linejoin="round">
<path d="M1660 620 L1663.300 616.600 L1666.600 620 M1660 624.500 L1663.300 628 L1666.600 624.500"/>
<path d="M1864 620 L1867.300 616.600 L1870.600 620 M1864 624.500 L1867.300 628 L1870.600 624.500"/>
</g>
<!-- icon: lock transparency -->
<path d="M1480 652h4v4h-4z M1488 652h4v4h-4z M1496 652h4v4h-4z M1504 652h4v4h-4z M1480 660h4v4h-4z M1488 660h4v4h-4z M1496 660h4v4h-4z M1504 660h4v4h-4z M1480 668h4v4h-4z M1488 668h4v4h-4z M1496 668h4v4h-4z M1504 668h4v4h-4z M1480 676h4v4h-4z M1488 676h4v4h-4z M1496 676h4v4h-4z M1504 676h4v4h-4z" fill="#c6c6c6"/>
<path d="M1484 656h4v4h-4z M1492 656h4v4h-4z M1500 656h4v4h-4z M1484 664h4v4h-4z M1492 664h4v4h-4z M1500 664h4v4h-4z M1484 672h4v4h-4z M1492 672h4v4h-4z M1500 672h4v4h-4z" fill="#808080"/>
<rect x="1479" y="651" width="13" height="16.500" fill="#383838"/>
<rect x="1480" y="658.300" width="10" height="7.500" fill="#e6e6e6"/>
<path d="M1482.500 658.500 V655.500 A2.500 2.500 0 0 1 1487.500 655.500 V658.500" fill="none" stroke="#e6e6e6" stroke-width="1.900"/>
<rect x="1484.300" y="660.300" width="1.500" height="3.600" fill="#555"/>
<!-- icon: pick up underlying color -->
<rect x="1521" y="663" width="18" height="16" fill="#808080" stroke="#f0f0f0" stroke-width="2"/>
<rect x="1513" y="653" width="18" height="16" fill="#383838" stroke="#f0f0f0" stroke-width="2"/>
<path d="M1521 663 V679 H1539 V663" fill="none" stroke="#f0f0f0" stroke-width="0"/>
<g transform="translate(1536 675.600) rotate(-135.500)">
<path d="M0 -1 L3 -2.700 H16 V2.700 H3 L0 1Z" fill="#808080" stroke="#f0f0f0" stroke-width="1.500"/>
<rect x="11" y="-1.600" width="5" height="3.200" fill="#383838"/>
<rect x="16" y="-4.800" width="3.200" height="9.600" fill="#f0f0f0"/>
<path d="M18.500 -3.300 H23 A3.300 3.300 0 0 1 23 3.300 H18.500Z" fill="#f0f0f0"/>
</g>
<!-- icon: composite -->
<rect x="1553" y="661" width="18" height="18" fill="#808080" stroke="#f0f0f0" stroke-width="2"/>
<rect x="1554" y="662" width="8" height="8" fill="#383838"/>
<path d="M1553 671 V661 H1563" fill="none" stroke="#808080" stroke-width="2"/>
<rect x="1545" y="653" width="18" height="18" fill="none" stroke="#f0f0f0" stroke-width="2"/>
<!-- eyes -->
<use href="#eye" x="1484" y="764"/><use href="#eye" x="1484" y="842"/><use href="#eye" x="1484" y="920"/><use href="#eye" x="1484" y="998"/>
<!-- layer icons -->
<use href="#lyr2"/><use href="#lyr2" y="78"/><use href="#lyr2" y="156"/>
<path d="M1852.600 985.900 L1870.400 976.800 L1879.300 987 L1860.500 995.400Z" fill="#808080" stroke="#d4d4d4" stroke-width="1.600"/>
<!-- bottom icons -->
<g id="bi1">
<path d="M1481 1082 L1500 1074.500 L1507 1084 L1488 1092Z" fill="#383838" stroke="#e6e6e6" stroke-width="1.600"/>
<path d="M1481 1078 L1500 1070.500 L1507 1080 L1488 1088Z" fill="#5c6a94" stroke="#e6e6e6" stroke-width="1.600"/>
<path d="M1481 1073.500 L1500 1066.500 L1507 1075.500 L1488 1083.500Z" fill="#383838" stroke="#e6e6e6" stroke-width="1.600"/>
</g>
<use href="#ptri" x="1510.300" y="1095.800" fill="#e6e6e6"/>
<path d="M1498.800 1084.500 L1510.600 1084.500" stroke="#1c1c1c" stroke-width="0" />
<g transform="translate(1535.600 1078.100) rotate(-47)" fill="#e6e6e6">
<path d="M0 -11.200 A11.200 11.200 0 0 0 0 11.200Z"/>
<path d="M-9 -3.800 L-20 -3.800 L-23.500 -0.500 L-20.500 2.600 L-9 2.600Z"/>
<rect x="-1" y="-7" width="10" height="3.500" rx="1"/><rect x="-1" y="3.500" width="10" height="3.500" rx="1"/>
</g>
<use href="#ptri" x="1548.200" y="1095.800" fill="#e6e6e6"/>
<!-- new layer -->
<path d="M1556 1070.300 H1565.800 M1560.900 1065.800 V1075.800" stroke="#f0b250" stroke-width="2.200"/>
<path d="M1557 1082.500 L1576 1075 L1583.500 1086 L1564.500 1094Z" fill="#f6cf8e" stroke="#f0b250" stroke-width="1.400"/>
<path d="M1567.500 1069.500 L1576.500 1066.200 L1583.500 1077 L1565 1084.500 L1562 1080.500 L1568 1078Z" fill="#f6c67c" stroke="#f0b250" stroke-width="1.400"/>
<!-- new watercolor layer -->
<path d="M1588 1070.300 H1597.800 M1592.900 1065.800 V1075.800" stroke="#f2f2f2" stroke-width="2.200"/>
<path d="M1589 1082.500 L1608 1075 L1615.500 1086 L1596.500 1094Z" fill="#808080" stroke="#e6e6e6" stroke-width="1.500"/>
<path d="M1599.500 1069.500 L1608.500 1066.200 L1615.500 1077 L1597 1084.500 L1594 1080.500 L1600 1078Z" fill="#d08a30"/>
<path d="M1600 1074.500 L1612 1069.800 M1597.500 1083 L1615 1076" stroke="#f2f2f2" stroke-width="2"/>
<path d="M1596.200 1079.500 L1613.500 1072.800" stroke="#e8b060" stroke-width="1"/>
<!-- new liquid ink -->
<path d="M1620 1070.300 H1629.800 M1624.900 1065.800 V1075.800" stroke="#f2f2f2" stroke-width="2.200"/>
<path d="M1621 1082.500 L1640 1075 L1647.500 1086 L1628.500 1094Z" fill="#808080" stroke="#e6e6e6" stroke-width="1.500"/>
<path d="M1632.500 1066 C1636 1070 1641 1074 1640.500 1080 C1640 1085 1634 1087.500 1630 1085 C1626.500 1082.500 1626.500 1079 1628 1077.500 C1629 1081 1632 1082.500 1634.500 1081 C1637.500 1078.500 1634 1072 1632.500 1066Z" fill="#5c6a94" stroke="#e6e6e6" stroke-width="1"/>
<!-- new dynamic plugin -->
<path d="M1652 1070.300 H1661.800 M1656.900 1065.800 V1075.800" stroke="#f2f2f2" stroke-width="2.200"/>
<path d="M1653 1082.500 L1672 1075 L1679.500 1086 L1660.500 1094Z" fill="#808080" stroke="#e6e6e6" stroke-width="1.500"/>
<path d="M1662 1072 L1671 1068.500 L1679 1080 L1670 1084 C1668 1081 1664 1083 1665.500 1086 L1660.500 1088 L1656.500 1082 C1660 1083 1663.500 1080 1662 1077Z" fill="#e0e0e0"/>
<path d="M1664.500 1069 A4 4 0 0 1 1672.500 1068.500" fill="none" stroke="#e6e6e6" stroke-width="1.500"/>
<circle cx="1672.500" cy="1079" r="2.600" fill="#808080"/>
<!-- mask -->
<rect x="1726" y="1066" width="28" height="28" fill="#e6e6e6"/><circle cx="1740" cy="1079.800" r="10" fill="#383838"/>
<!-- lock -->
<rect x="1767.800" y="1076" width="20.400" height="18" fill="#e6e6e6"/>
<path d="M1772.800 1076.500 V1072.500 A5.200 5.200 0 0 1 1783.200 1072.500 V1076.500" fill="none" stroke="#e6e6e6" stroke-width="2.500"/>
<circle cx="1778" cy="1083.200" r="1.800" fill="#2a2a2a"/><rect x="1777.100" y="1083.500" width="1.800" height="6.500" fill="#2a2a2a"/>
<!-- trash -->
<rect x="1853.900" y="1068" width="24.200" height="4" fill="#e6e6e6"/><rect x="1861.800" y="1066" width="8.200" height="2.500" fill="#e6e6e6"/>
<path d="M1855.700 1074.300 H1876 L1873.800 1094 H1858Z" fill="#e6e6e6"/>
<rect x="1861.800" y="1078.200" width="2.200" height="11.800" fill="#2a2a2a"/><rect x="1867.800" y="1078.200" width="2.200" height="11.800" fill="#2a2a2a"/>
<!-- dots -->
<g fill="#d2d2d2"><circle cx="1666" cy="1106" r="4"/><circle cx="1682" cy="1106" r="4"/><circle cx="1698" cy="1106" r="4"/></g>
</svg>
</div>
</body>
</html>
